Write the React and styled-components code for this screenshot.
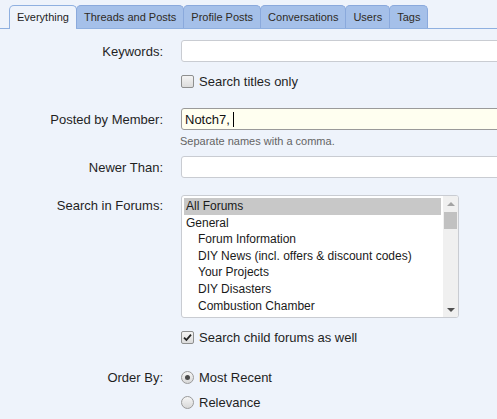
import React from 'react';
import styled, { createGlobalStyle } from 'styled-components';

const GlobalStyle = createGlobalStyle`
  html, body {
    margin: 0;
    padding: 0;
    background: #eef3fb;
  }
  body {
    font-family: "Liberation Sans", Arial, sans-serif;
    font-size: 13px;
    color: #1f1f1f;
  }
`;

const Page = styled.div`
  width: 497px;
  height: 419px;
  overflow: hidden;
  background: #eef3fb;
`;

const TabBar = styled.ul`
  list-style: none;
  margin: 0;
  padding: 5px 0 0 10px;
  display: flex;
  border-bottom: 1px solid #8fb0e0;
`;

const Tab = styled.li`
  line-height: 23px;
  font-size: 11px;
  padding: 0 7px;
  border: 1px solid ${p => (p.$active ? '#8fb0e0' : '#8aa9dc')};
  border-bottom: none;
  border-radius: 5px 5px 0 0;
  background: ${p => (p.$active ? '#eef3fb' : '#a5c0e9')};
  color: ${p => (p.$active ? '#1e1e1e' : '#2f2b25')};
  margin-bottom: ${p => (p.$active ? '-1px' : '0')};
  height: ${p => (p.$active ? '23px' : '22px')};
  margin-left: -1px;
  white-space: nowrap;
`;

const Form = styled.div`
  display: flex;
  flex-direction: column;
`;

const Row = styled.div`
  display: grid;
  grid-template-columns: 163px 1fr;
  column-gap: 18px;
  margin-top: ${p => p.$mt || 0}px;
  align-items: ${p => (p.$top ? 'start' : 'center')};
`;

const Label = styled.div`
  text-align: right;
  color: #1f1f1f;
  padding-top: ${p => p.$pt || 0}px;
`;

const TextInput = styled.div`
  height: 20px;
  margin-right: -20px;
  border: 1px solid ${p => (p.$focus ? '#9a9a9a' : '#c9ccd2')};
  border-radius: 3px;
  background: ${p => (p.$focus ? '#fffff0' : '#ffffff')};
  display: flex;
  align-items: center;
  padding-left: 3px;
  color: #111;
`;

const Caret = styled.span`
  display: inline-block;
  width: 1px;
  height: 15px;
  background: #000;
  margin-left: 3px;
`;

const Hint = styled.div`
  font-size: 11px;
  color: #646464;
  margin-top: 5px;
  margin-left: -1px;
`;

const CheckLine = styled.label`
  display: flex;
  align-items: center;
  gap: 5px;
  height: 16px;
`;

const Box = styled.span`
  width: 11px;
  height: 11px;
  border: 1px solid #8e8f8f;
  border-radius: 2px;
  background: linear-gradient(#f4f4f4, #dcdcdc);
  display: inline-flex;
  align-items: center;
  justify-content: center;
  flex: none;
`;

const Radio = styled.span`
  width: 11px;
  height: 11px;
  border: 1px solid #9a9a9a;
  border-radius: 50%;
  background: linear-gradient(#f6f6f6, #d8d8d8);
  display: inline-flex;
  align-items: center;
  justify-content: center;
  flex: none;
  &::after {
    content: '';
    width: 5px;
    height: 5px;
    border-radius: 50%;
    background: ${p => (p.$on ? '#4a4a4a' : 'transparent')};
  }
`;

const ListBox = styled.div`
  width: 276px;
  height: 121px;
  border: 1px solid #c9ccd2;
  border-radius: 3px;
  background: #fff;
  display: flex;
  overflow: hidden;
`;

const Options = styled.div`
  flex: 1;
  padding: 2px 0 0 2px;
  display: flex;
  flex-direction: column;
`;

const Option = styled.div`
  height: 16.6px;
  line-height: 16.6px;
  font-size: 12px;
  padding-left: ${p => (p.$child ? 14 : 2)}px;
  background: ${p => (p.$selected ? '#c8c8c8' : 'transparent')};
  color: #1a1a1a;
  white-space: nowrap;
  margin-right: 2px;
`;

const ScrollTrack = styled.div`
  width: 15px;
  background: #f0f0f0;
  display: flex;
  flex-direction: column;
  align-items: center;
`;

const Arrow = styled.div`
  width: 0;
  height: 0;
  border-left: 4px solid transparent;
  border-right: 4px solid transparent;
  ${p =>
    p.$down
      ? 'border-top: 4px solid #505050; margin-top: auto; margin-bottom: 5px;'
      : 'border-bottom: 4px solid #a3a3a3; margin-top: 6px;'}
`;

const Thumb = styled.div`
  width: 13px;
  height: 17px;
  background: #c1c1c1;
  margin-top: 6px;
`;

const forums = [
  { name: 'All Forums', selected: true },
  { name: 'General' },
  { name: 'Forum Information', child: true },
  { name: 'DIY News (incl. offers & discount codes)', child: true },
  { name: 'Your Projects', child: true },
  { name: 'DIY Disasters', child: true },
  { name: 'Combustion Chamber', child: true },
];

const tabs = ['Everything', 'Threads and Posts', 'Profile Posts', 'Conversations', 'Users', 'Tags'];

const Tick = () => (
  <svg width="9" height="9" viewBox="0 0 9 9">
    <path d="M1 4.6 L3.4 7 L8 1.6" fill="none" stroke="#222" strokeWidth="1.8" />
  </svg>
);

export default function App() {
  return (
    <Page>
      <GlobalStyle />
      <TabBar>
        {tabs.map((t, i) => (
          <Tab key={t} $active={i === 0}>{t}</Tab>
        ))}
      </TabBar>
      <Form>
        <Row $mt={11}>
          <Label>Keywords:</Label>
          <TextInput />
        </Row>
        <Row $mt={11}>
          <span />
          <CheckLine>
            <Box />
            Search titles only
          </CheckLine>
        </Row>
        <Row $mt={19}>
          <Label>Posted by Member:</Label>
          <TextInput $focus>
            Notch7,<Caret />
          </TextInput>
        </Row>
        <Row $mt={0}>
          <span />
          <Hint>Separate names with a comma.</Hint>
        </Row>
        <Row $mt={9}>
          <Label>Newer Than:</Label>
          <TextInput />
        </Row>
        <Row $mt={17} $top>
          <Label $pt={3}>Search in Forums:</Label>
          <ListBox>
            <Options>
              {forums.map(f => (
                <Option key={f.name} $child={f.child} $selected={f.selected}>
                  {f.name}
                </Option>
              ))}
            </Options>
            <ScrollTrack>
              <Arrow />
              <Thumb />
              <Arrow $down />
            </ScrollTrack>
          </ListBox>
        </Row>
        <Row $mt={11}>
          <span />
          <CheckLine>
            <Box>
              <Tick />
            </Box>
            Search child forums as well
          </CheckLine>
        </Row>
        <Row $mt={24}>
          <Label>Order By:</Label>
          <CheckLine>
            <Radio $on />
            Most Recent
          </CheckLine>
        </Row>
        <Row $mt={9}>
          <span />
          <CheckLine>
            <Radio />
            Relevance
          </CheckLine>
        </Row>
      </Form>
    </Page>
  );
}
